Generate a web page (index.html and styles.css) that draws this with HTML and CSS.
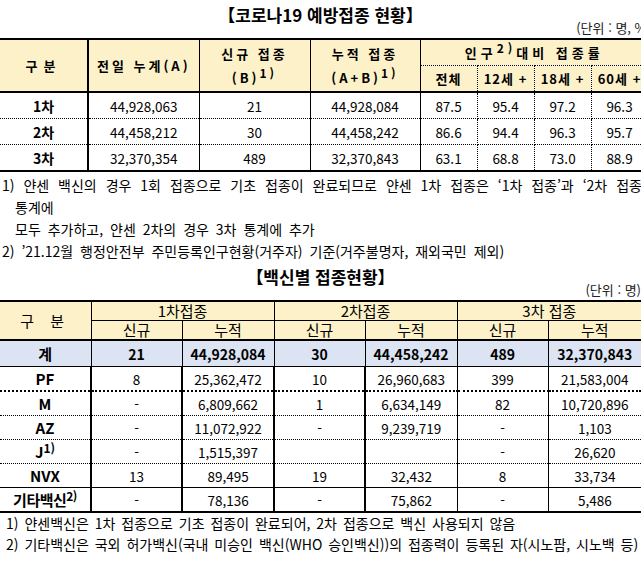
FILE: index.html
```html
<!DOCTYPE html>
<html lang="ko">
<head>
<meta charset="utf-8">
<title>코로나19 예방접종 현황</title>
<link rel="stylesheet" href="styles.css">
</head>
<body>
<div class="title">【코로나19 예방접종 현황】</div>
<div class="unit unit--cut">(단위 : 명, %)</div>
<table class="t1">
  <colgroup>
    <col class="w88"><col class="w111"><col class="w111"><col class="w110"><col class="w57"><col class="w57"><col class="w57"><col class="w57">
  </colgroup>
  <thead>
    <tr>
      <th rowspan="2" class="b-thick">구분</th>
      <th rowspan="2" class="b-thin">전일 누계(A)</th>
      <th rowspan="2" class="b-thin two">신규 접종<br>(B)<sup>1)</sup></th>
      <th rowspan="2" class="b-thin two">누적 접종<br>(A+B)<sup>1)</sup></th>
      <th colspan="4" class="wide">인구<sup>2)</sup>대비 접종률</th>
    </tr>
    <tr class="sub">
      <th class="b-dot">전체</th>
      <th class="b-dot">12세 +</th>
      <th class="b-dot">18세 +</th>
      <th class="b-dot">60세 +</th>
    </tr>
  </thead>
  <tbody>
    <tr>
      <th class="b-thick">1차</th><td class="b-thin">44,928,063</td><td class="b-thin">21</td><td class="b-thin">44,928,084</td><td class="b-dot">87.5</td><td class="b-dot">95.4</td><td class="b-dot">97.2</td><td class="b-dot">96.3</td>
    </tr>
    <tr>
      <th class="b-thick">2차</th><td class="b-thin">44,458,212</td><td class="b-thin">30</td><td class="b-thin">44,458,242</td><td class="b-dot">86.6</td><td class="b-dot">94.4</td><td class="b-dot">96.3</td><td class="b-dot">95.7</td>
    </tr>
    <tr class="last">
      <th class="b-thick">3차</th><td class="b-thin">32,370,354</td><td class="b-thin">489</td><td class="b-thin">32,370,843</td><td class="b-dot">63.1</td><td class="b-dot">68.8</td><td class="b-dot">73.0</td><td class="b-dot">88.9</td>
    </tr>
  </tbody>
</table>
<div class="notes notes--first">
  <p class="note note--wide">1) 얀센 백신의 경우 1회 접종으로 기초 접종이 완료되므로 얀센 1차 접종은 ‘1차 접종’과 ‘2차 접종’</p>
  <p class="note note--indent">통계에</p>
  <p class="note note--indent">모두 추가하고, 얀센 2차의 경우 3차 통계에 추가</p>
  <p class="note">2) ’21.12월 행정안전부 주민등록인구현황(거주자) 기준(거주불명자, 재외국민 제외)</p>
</div>

<div class="title title--second">【백신별 접종현황】</div>
<div class="unit">(단위 : 명)</div>
<table class="t2">
  <colgroup>
    <col class="w91"><col class="w91"><col class="w92"><col class="w91"><col class="w92"><col class="w91"><col class="w93">
  </colgroup>
  <thead>
    <tr>
      <th rowspan="2">구 분</th>
      <th colspan="2">1차접종</th>
      <th colspan="2">2차접종</th>
      <th colspan="2">3차 접종</th>
    </tr>
    <tr>
      <th>신규</th><th>누적</th><th>신규</th><th>누적</th><th>신규</th><th>누적</th>
    </tr>
  </thead>
  <tbody>
    <tr class="total">
      <th>계</th><td>21</td><td>44,928,084</td><td>30</td><td>44,458,242</td><td>489</td><td>32,370,843</td>
    </tr>
    <tr class="row dot2">
      <th>PF</th><td>8</td><td>25,362,472</td><td>10</td><td>26,960,683</td><td>399</td><td>21,583,004</td>
    </tr>
    <tr class="row">
      <th>M</th><td>-</td><td>6,809,662</td><td>1</td><td>6,634,149</td><td>82</td><td>10,720,896</td>
    </tr>
    <tr class="row">
      <th>AZ</th><td>-</td><td>11,072,922</td><td>-</td><td>9,239,719</td><td>-</td><td>1,103</td>
    </tr>
    <tr class="row">
      <th>J<sup>1)</sup></th><td>-</td><td>1,515,397</td><td></td><td></td><td>-</td><td>26,620</td>
    </tr>
    <tr class="row solid">
      <th>NVX</th><td>13</td><td>89,495</td><td>19</td><td>32,432</td><td>8</td><td>33,734</td>
    </tr>
    <tr class="row end">
      <th class="etc">기타백신<sup>2)</sup></th><td>-</td><td>78,136</td><td>-</td><td>75,862</td><td>-</td><td>5,486</td>
    </tr>
  </tbody>
</table>
<div class="notes notes--second">
  <p class="note">1) 얀센백신은 1차 접종으로 기초 접종이 완료되어, 2차 접종으로 백신 사용되지 않음</p>
  <p class="note">2) 기타백신은 국외 허가백신(국내 미승인 백신(WHO 승인백신))의 접종력이 등록된 자(시노팜, 시노백 등)</p>
</div>
</body>
</html>
```

FILE: styles.css
```css
html, body {
  margin: 0;
  padding: 0;
  overflow: hidden;
  background: #fff;
}
body {
  width: 641px;
  font-family: "Noto Sans CJK KR", "Noto Sans", sans-serif;
  color: #000;
}

.title {
  height: 30px;
  line-height: 30px;
  text-align: center;
  font-size: 17px;
  font-weight: bold;
  white-space: nowrap;
}
.unit {
  margin-top: -8px;
  margin-bottom: 4px;
  height: 12px;
  line-height: 12px;
  font-size: 13px;
  text-align: right;
  white-space: nowrap;
  color: #222;
}
.unit--cut { margin-right: -10px; }

/* column widths */
.w88 { width: 88px; }
.w110 { width: 110px; }
.w111 { width: 111px; }
.w57 { width: 57px; }
.w91 { width: 91px; }
.w92 { width: 92px; }
.w93 { width: 93px; }

table {
  border-collapse: collapse;
  table-layout: fixed;
}
th, td {
  padding: 0;
  text-align: center;
  vertical-align: middle;
  white-space: nowrap;
  overflow: hidden;
}
sup {
  font-size: 12px;
  line-height: 0;
  vertical-align: 5px;
}

/* ---------- table 1 ---------- */
.t1 { width: 648px; }
.t1 thead th {
  background: #fdf1c9;
  font-size: 13px;
  font-weight: bold;
  letter-spacing: 3px;
  height: 25px;
  line-height: 20px;
  border-top: 2px solid #000;
  border-bottom: 2px solid #000;
}
.t1 thead tr.sub th {
  border-top: 1px dotted #000;
  letter-spacing: 1px;
}
.t1 thead th.wide {
  border-bottom: 1px dotted #000;
  letter-spacing: 4px;
}
.t1 thead th.two { line-height: 24px; }
.t1 thead th:first-child { letter-spacing: 6px; }
.t1 .b-thick { border-right: 2px solid #000; }
.t1 .b-thin { border-right: 1px solid #000; }
.t1 .b-dot { border-right: 1px dotted #000; }
.t1 tbody td, .t1 tbody th {
  height: 25px;
  line-height: 20px;
  font-size: 13.5px;
  border-bottom: 1px dotted #000;
}
.t1 tbody th { font-weight: bold; font-size: 14px; }
.t1 tbody td { font-weight: normal; }
.t1 tbody tr.last td, .t1 tbody tr.last th { border-bottom: 2px solid #000; }

/* ---------- notes ---------- */
.notes { padding-top: 2px; }
.note {
  margin: 0;
  font-size: 14px;
  line-height: 22px;
  white-space: nowrap;
  word-spacing: 3px;
  padding-left: 2px;
}
.note--wide { word-spacing: 5px; }
.note--indent { padding-left: 15px; }
.notes--first { height: 88px; }
.notes--second { padding-top: 0; }
.notes--second .note { line-height: 21px; padding-left: 6px; word-spacing: 2px; }

/* ---------- table 2 ---------- */
.t2 { width: 641px; }
.t2 thead th {
  background: #fdf1c9;
  font-size: 15px;
  font-weight: normal;
  height: 18px;
  line-height: 18px;
  border: 1px solid #000;
  border-left: none;
}
.t2 thead tr:first-child th { border-top: 2px solid #000; }
.t2 thead tr:last-child th,
.t2 thead th[rowspan] { border-bottom: 2px solid #000; }
.t2 thead th:last-child { border-right: none; }
.t2 thead th[rowspan] { letter-spacing: 6px; }

.t2 tbody th, .t2 tbody td {
  height: 23px;
  line-height: 20px;
  font-size: 13.5px;
  border-right: 1px solid #000;
  border-bottom: 1px dotted #000;
}
.t2 tbody tr > :last-child { border-right: none; }
.t2 tbody th { font-weight: bold; font-size: 15px; }

.t2 tr.total th, .t2 tr.total td {
  background: #dce3f2;
  height: 25px;
  font-weight: bold;
  font-size: 14px;
  border-bottom: 1px solid #000;
}
.t2 tr.total th { font-size: 15px; }
.t2 tr.row > :nth-child(1),
.t2 tr.row > :nth-child(2),
.t2 tr.row > :nth-child(3),
.t2 tr.row > :nth-child(4) { border-right: 2px solid #000; }
.t2 tr.dot2 > * { border-bottom: 2px dotted #000; }
.t2 tr.solid > * { border-bottom: 1px solid #000; }
.t2 tr.end > * { border-bottom: 2px solid #000; }
.t2 th.etc { letter-spacing: -0.5px; }
```
